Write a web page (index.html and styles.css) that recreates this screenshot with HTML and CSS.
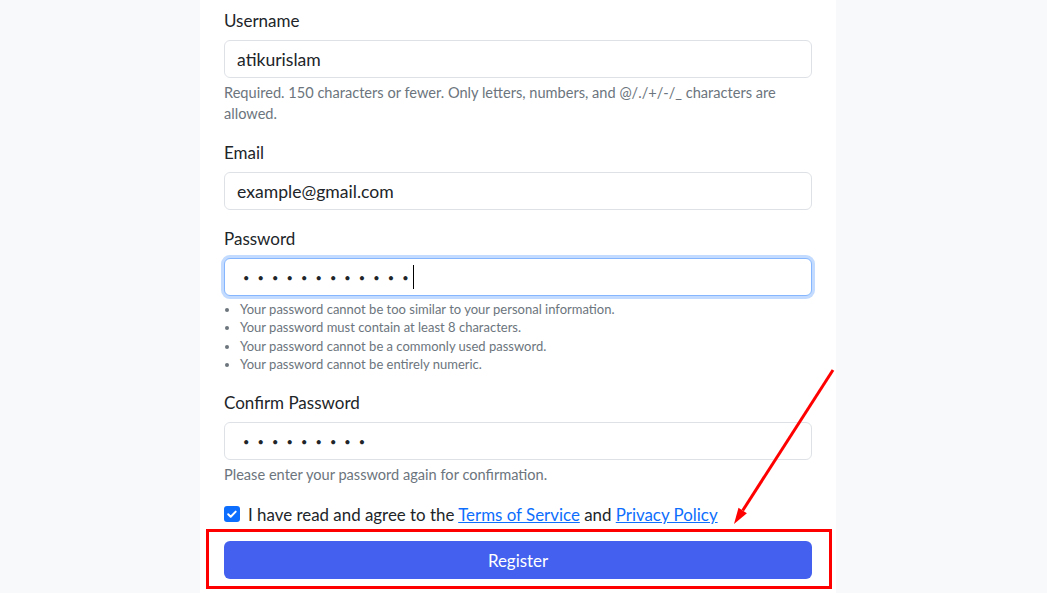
FILE: index.html
```html
<!DOCTYPE html>
<html lang="en">
<head>
<meta charset="utf-8">
<title>Register</title>
<link rel="stylesheet" href="styles.css">
</head>
<body>
<div class="page">
  <form class="card">
    <div class="group">
      <label class="form-label">Username</label>
      <input class="form-control" type="text" value="atikurislam">
      <div class="help">Required. 150 characters or fewer. Only letters, numbers, and @/./+/-/_ characters are allowed.</div>
    </div>
    <div class="group">
      <label class="form-label">Email</label>
      <input class="form-control" type="email" value="example@gmail.com">
    </div>
    <div class="group">
      <label class="form-label">Password</label>
      <div class="field focused">
        <input class="form-control pw" type="password" value="abcdefghijkl">
        <span class="caret"></span>
      </div>
      <ul class="rules">
        <li>Your password cannot be too similar to your personal information.</li>
        <li>Your password must contain at least 8 characters.</li>
        <li>Your password cannot be a commonly used password.</li>
        <li>Your password cannot be entirely numeric.</li>
      </ul>
    </div>
    <div class="group">
      <label class="form-label">Confirm Password</label>
      <input class="form-control pw" type="password" value="abcdefghi">
      <div class="help">Please enter your password again for confirmation.</div>
    </div>
    <div class="check-row">
      <span class="checkbox"><svg viewBox="0 0 16 16" width="16" height="16"><path d="M4.2 8.3l2.5 2.5 5-5.2" fill="none" stroke="#fff" stroke-width="2" stroke-linecap="round" stroke-linejoin="round"/></svg></span>
      <span class="check-text">I have read and agree to the <a href="#">Terms of Service</a> and <a href="#">Privacy Policy</a></span>
    </div>
    <div class="btn-wrap">
      <button type="button" class="btn">Register</button>
      <span class="highlight"></span>
    </div>
    <svg class="arrow" width="110" height="170" viewBox="0 0 110 170">
      <line x1="103" y1="4" x2="12.7" y2="144.5" stroke="#f00" stroke-width="3"/>
      <polygon points="4,158 8.5,141.8 16.9,147.2" fill="#f00"/>
    </svg>
  </form>
</div>
</body>
</html>
```

FILE: styles.css
```css
html, body {
  margin: 0;
  padding: 0;
  background: #f8f9fa;
  height: 593px;
  overflow: hidden;
}
.page {
  padding-left: 200px;
  font-family: Lato, "Liberation Sans", sans-serif;
  color: #212529;
}
.card {
  position: relative;
  width: 588px;
  background: #fff;
  padding: 9px 24px 30px;
  margin: 0;
}
.group {
  margin-bottom: 17px;
}
.form-label {
  display: block;
  font-size: 17px;
  line-height: 24px;
  margin-bottom: 7px;
}
.form-control {
  box-sizing: border-box;
  display: block;
  width: 100%;
  height: 38px;
  padding: 0 12px;
  font-family: inherit;
  font-size: 17.6px;
  color: #212529;
  background: #fff;
  border: 1px solid #dee2e6;
  border-radius: 6px;
  outline: none;
}
.field {
  position: relative;
}
.field.focused .form-control {
  border-color: #86b7fe;
  box-shadow: 0 0 0 3px rgba(13, 110, 253, 0.25);
}
.pw {
  font-size: 11px;
  letter-spacing: 8.1px;
  padding-left: 18px;
}
.caret {
  position: absolute;
  left: 189px;
  top: 7px;
  width: 1px;
  height: 24px;
  background: #000;
}
.help {
  margin-top: 4px;
  font-size: 14.6px;
  line-height: 21px;
  color: #6c757d;
}
.rules {
  margin: 4px 0 0;
  padding: 0 0 1px 16px;
  font-size: 13px;
  line-height: 18.3px;
  color: #6c757d;
}
.check-row {
  display: flex;
  align-items: center;
  gap: 8px;
  height: 24px;
  font-size: 16.9px;
  margin-bottom: 15px;
}
.checkbox {
  display: flex;
  width: 16px;
  height: 16px;
  border-radius: 3px;
  background: #0d6efd;
}
.check-text a {
  color: #0d6efd;
  text-decoration: underline;
}
.btn-wrap {
  position: relative;
}
.btn {
  display: block;
  width: 100%;
  height: 38px;
  border: 0;
  border-radius: 6px;
  background: #4361ee;
  color: #fff;
  font-family: inherit;
  font-size: 16.9px;
}
.highlight {
  position: absolute;
  left: -18px;
  top: -12px;
  width: 620px;
  height: 54px;
  border: 3px solid #f00;
}
.arrow {
  position: absolute;
  left: 530px;
  top: 366px;
}
```
